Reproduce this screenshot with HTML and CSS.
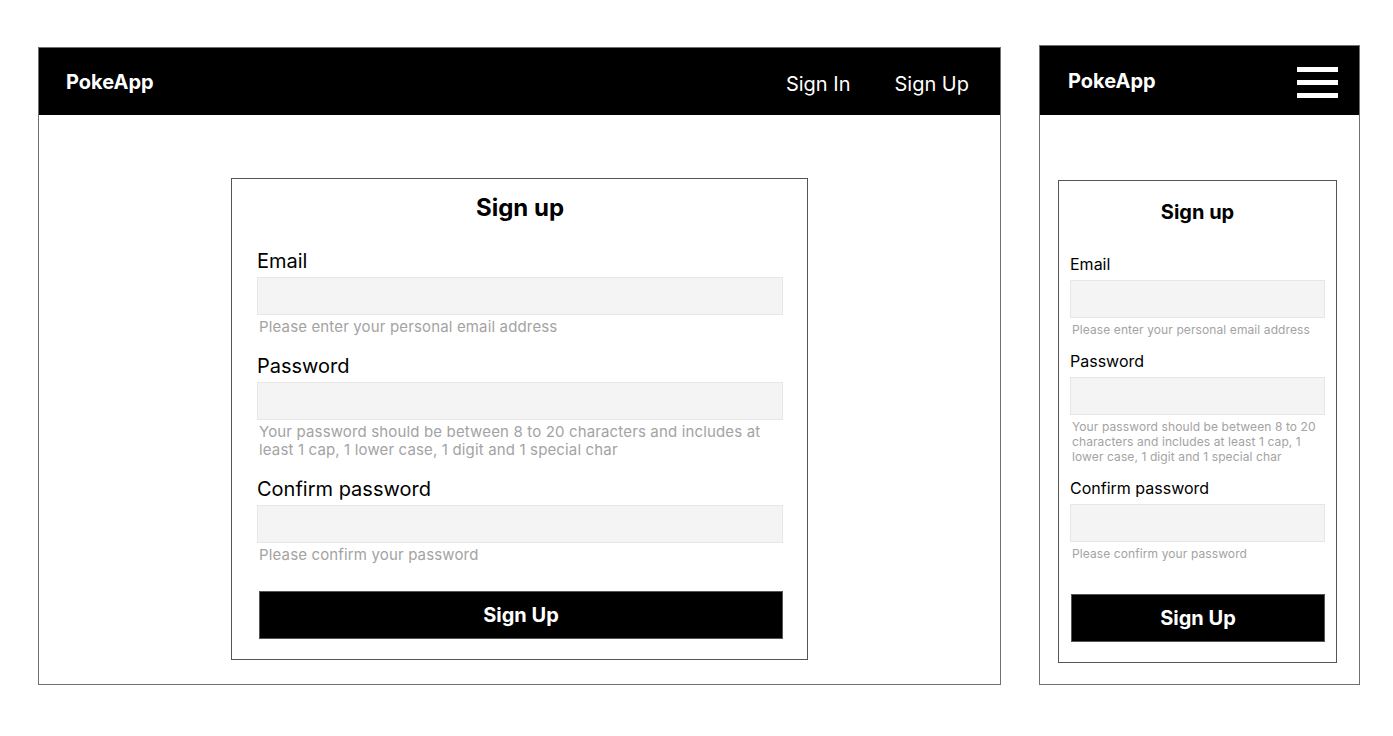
FILE: index.html
```html
<!DOCTYPE html>
<html lang="en">
<head>
<meta charset="utf-8">
<title>PokeApp - Sign up</title>
<link rel="stylesheet" href="styles.css">
</head>
<body>
<div class="canvas">
  <section class="frame frame-desktop">
    <header class="topbar topbar-desktop">
      <div class="brand">PokeApp</div>
      <nav class="nav">
        <a class="nav-link">Sign In</a>
        <a class="nav-link">Sign Up</a>
      </nav>
    </header>
    <form class="card card-desktop">
      <h1 class="card-title">Sign up</h1>
      <div class="field">
        <label class="field-label">Email</label>
        <input class="field-input" type="text">
        <p class="field-hint">Please enter your personal email address</p>
      </div>
      <div class="field">
        <label class="field-label">Password</label>
        <input class="field-input" type="password">
        <p class="field-hint">Your password should be between 8 to 20 characters and includes at least 1 cap, 1 lower case, 1 digit and 1 special char</p>
      </div>
      <div class="field">
        <label class="field-label">Confirm password</label>
        <input class="field-input" type="password">
        <p class="field-hint">Please confirm your password</p>
      </div>
      <button class="submit" type="button">Sign Up</button>
    </form>
  </section>

  <section class="frame frame-mobile">
    <header class="topbar topbar-mobile">
      <div class="brand">PokeApp</div>
      <div class="burger"><span></span><span></span><span></span></div>
    </header>
    <form class="card card-mobile">
      <h1 class="card-title">Sign up</h1>
      <div class="field">
        <label class="field-label">Email</label>
        <input class="field-input" type="text">
        <p class="field-hint">Please enter your personal email address</p>
      </div>
      <div class="field">
        <label class="field-label">Password</label>
        <input class="field-input" type="password">
        <p class="field-hint">Your password should be between 8 to 20 characters and includes at least 1 cap, 1 lower case, 1 digit and 1 special char</p>
      </div>
      <div class="field">
        <label class="field-label">Confirm password</label>
        <input class="field-input" type="password">
        <p class="field-hint">Please confirm your password</p>
      </div>
      <button class="submit" type="button">Sign Up</button>
    </form>
  </section>
</div>
</body>
</html>
```

FILE: styles.css
```css
* { box-sizing: border-box; }

html, body {
  margin: 0;
  padding: 0;
  background: #ffffff;
  font-family: Inter, "Noto Sans", "Liberation Sans", sans-serif;
  color: #000;
}

.canvas {
  display: flex;
  align-items: flex-start;
  gap: 38px;
  padding-left: 38px;
}

.frame {
  border: 1px solid #6f6f6f;
  background: #fff;
  display: flex;
  flex-direction: column;
}

.frame-desktop {
  width: 963px;
  height: 638px;
  margin-top: 47px;
}

.frame-mobile {
  width: 321px;
  height: 640px;
  margin-top: 45px;
}

.topbar {
  background: #000;
  color: #fff;
  display: flex;
  align-items: center;
  justify-content: space-between;
}

.topbar-desktop {
  height: 67px;
  padding: 0 31px 0 27px;
}

.topbar-mobile {
  height: 69px;
  padding: 0 21px 0 28px;
}

.brand {
  font-weight: 700;
  font-size: 20px;
  line-height: 24px;
}

.nav {
  display: flex;
  gap: 44px;
  padding-top: 4px;
}

.nav-link {
  font-size: 20px;
  line-height: 24px;
  color: #fff;
}

.burger {
  width: 41px;
  display: flex;
  flex-direction: column;
  gap: 8px;
  margin-top: 4px;
}

.burger span {
  display: block;
  height: 5px;
  background: #fff;
}

.card {
  border: 1px solid #555;
  display: flex;
  flex-direction: column;
  margin: 0;
}

.card-title {
  margin: 0;
  text-align: center;
  font-weight: 700;
}

.field {
  display: flex;
  flex-direction: column;
}

.field-label {
  display: block;
}

.field-input {
  display: block;
  width: 100%;
  height: 38px;
  margin: 0;
  background: #f4f4f4;
  border: 1px solid #e6e6e6;
  padding: 0;
  font: inherit;
}

.field-hint {
  margin: 3px 0 0;
  padding-left: 2px;
  color: #a3a3a3;
}

.submit {
  display: block;
  height: 48px;
  background: #000;
  color: #fff;
  border: 1px solid #555;
  font-family: inherit;
  font-weight: 700;
  font-size: 20px;
  padding: 0;
}

/* Desktop card */
.card-desktop {
  width: 577px;
  margin: 63px auto 0;
  padding: 14px 24px 20px 25px;
}

.card-desktop .card-title {
  font-size: 24px;
  line-height: 29px;
  margin-bottom: 27px;
}

.card-desktop .field + .field { margin-top: 18px; }

.card-desktop .field-label {
  font-size: 20px;
  line-height: 24px;
  margin-bottom: 4px;
}

.card-desktop .field-hint {
  font-size: 15px;
  line-height: 18px;
  letter-spacing: 0.15px;
}

.card-desktop .submit {
  margin: 27px 0 0 2px;
}

/* Mobile card */
.card-mobile {
  width: 279px;
  margin: 65px 0 0 18px;
  padding: 19px 11px 20px 11px;
}

.card-mobile .card-title {
  font-size: 20px;
  line-height: 24px;
  margin-bottom: 30px;
}

.card-mobile .field + .field { margin-top: 14px; }

.card-mobile .field-label {
  font-size: 16px;
  line-height: 20px;
  margin-bottom: 6px;
}

.card-mobile .field-hint {
  font-size: 12px;
  line-height: 15px;
  margin-top: 4px;
  letter-spacing: 0.1px;
}

.card-mobile .submit {
  margin: 33px 0 0 1px;
}
```
